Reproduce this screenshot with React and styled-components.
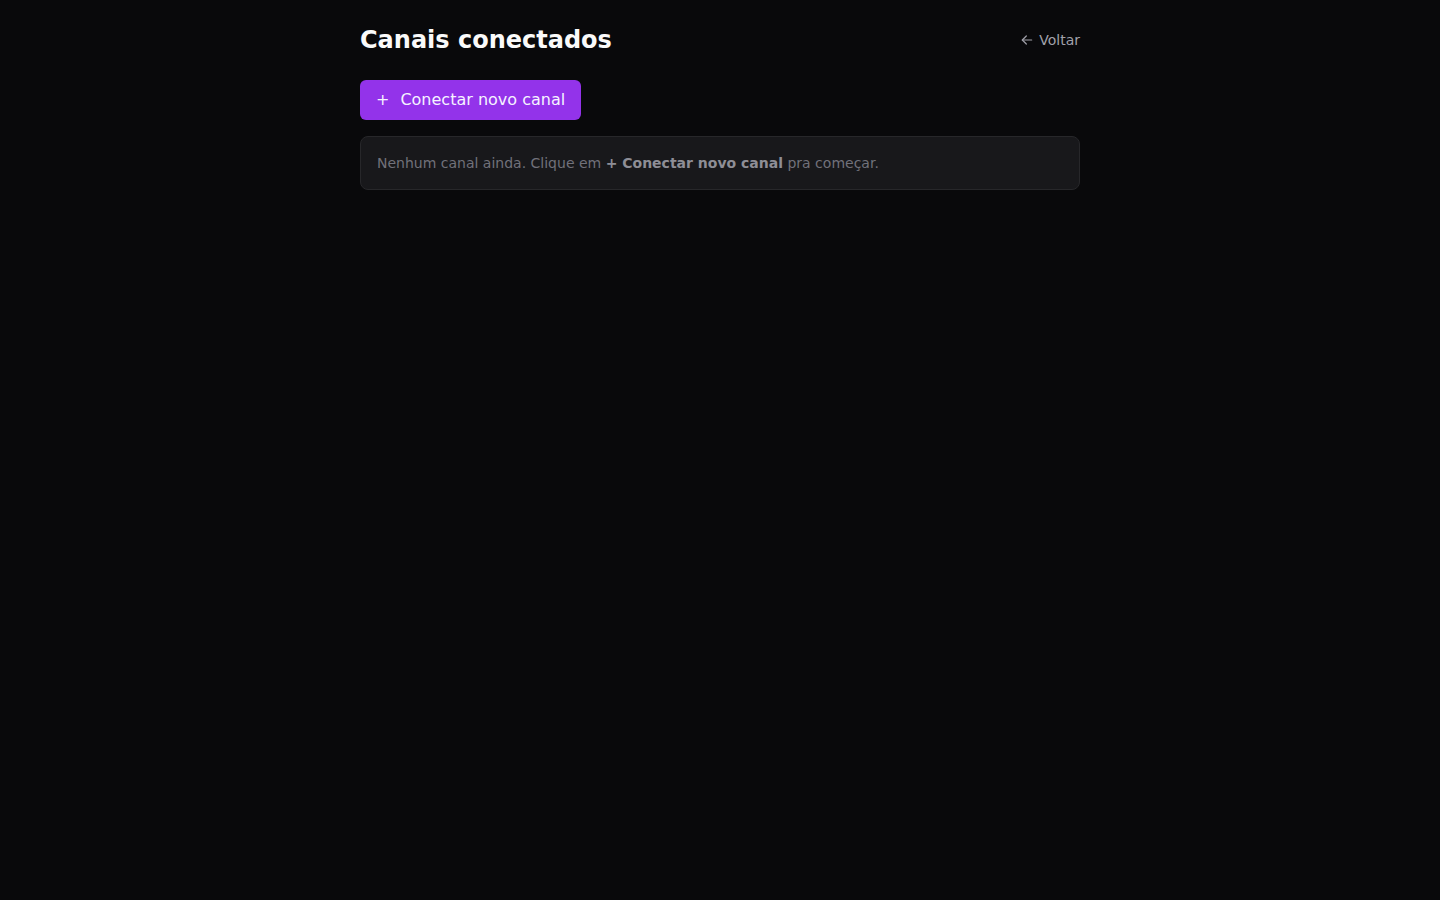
import React from "react";
import styled, { createGlobalStyle } from "styled-components";

const Global = createGlobalStyle`
  html, body { margin: 0; padding: 0; background: #09090b; }
  body { font-family: "DejaVu Sans", "Noto Sans", sans-serif; color: #fafafa; min-height: 100vh; }
  * { box-sizing: border-box; }
`;

const Page = styled.main`
  max-width: 720px;
  margin: 0 auto;
  padding: 24px 0;
  display: flex;
  flex-direction: column;
`;

const Header = styled.header`
  display: flex;
  align-items: center;
  justify-content: space-between;
  height: 32px;
  margin-bottom: 24px;
`;

const Title = styled.h1`
  margin: 0;
  font-size: 24px;
  line-height: 32px;
  font-weight: 700;
  color: #fafafa;
`;

const BackLink = styled.a`
  display: inline-flex;
  align-items: center;
  gap: 4px;
  font-size: 14px;
  line-height: 20px;
  color: #a1a1aa;
  text-decoration: none;
  cursor: pointer;
`;

const Actions = styled.div`
  display: flex;
  margin-bottom: 16px;
`;

const PrimaryButton = styled.button`
  display: inline-flex;
  align-items: center;
  gap: 11px;
  height: 40px;
  padding: 0 16px 1px;
  border: none;
  border-radius: 6px;
  background: #9333ea;
  color: #f5f3ff;
  font-family: inherit;
  font-size: 16px;
  line-height: 20px;
  cursor: pointer;
`;

const Glyph = styled.span`
  display: inline-block;
`;

const EmptyCard = styled.div`
  background: #18181b;
  border: 1px solid #27272a;
  border-radius: 8px;
  padding: 16px;
  font-size: 14px;
  line-height: 20px;
  color: #71717a;

  strong { color: #8e8e96; font-weight: 700; }
`;

export default function App() {
  return (
    <>
      <Global />
      <Page>
        <Header>
          <Title>Canais conectados</Title>
          <BackLink>
            <svg width="16" height="16" viewBox="0 0 24 24" fill="none" stroke="currentColor" strokeWidth="1.8" strokeLinecap="round" strokeLinejoin="round">
              <path d="M19 12H5" />
              <path d="M11 18l-6-6 6-6" />
            </svg>
            Voltar
          </BackLink>
        </Header>
        <Actions>
          <PrimaryButton>
            <Glyph>+</Glyph>
            Conectar novo canal
          </PrimaryButton>
        </Actions>
        <EmptyCard>
          Nenhum canal ainda. Clique em <strong>+ Conectar novo canal</strong> pra começar.
        </EmptyCard>
      </Page>
    </>
  );
}
